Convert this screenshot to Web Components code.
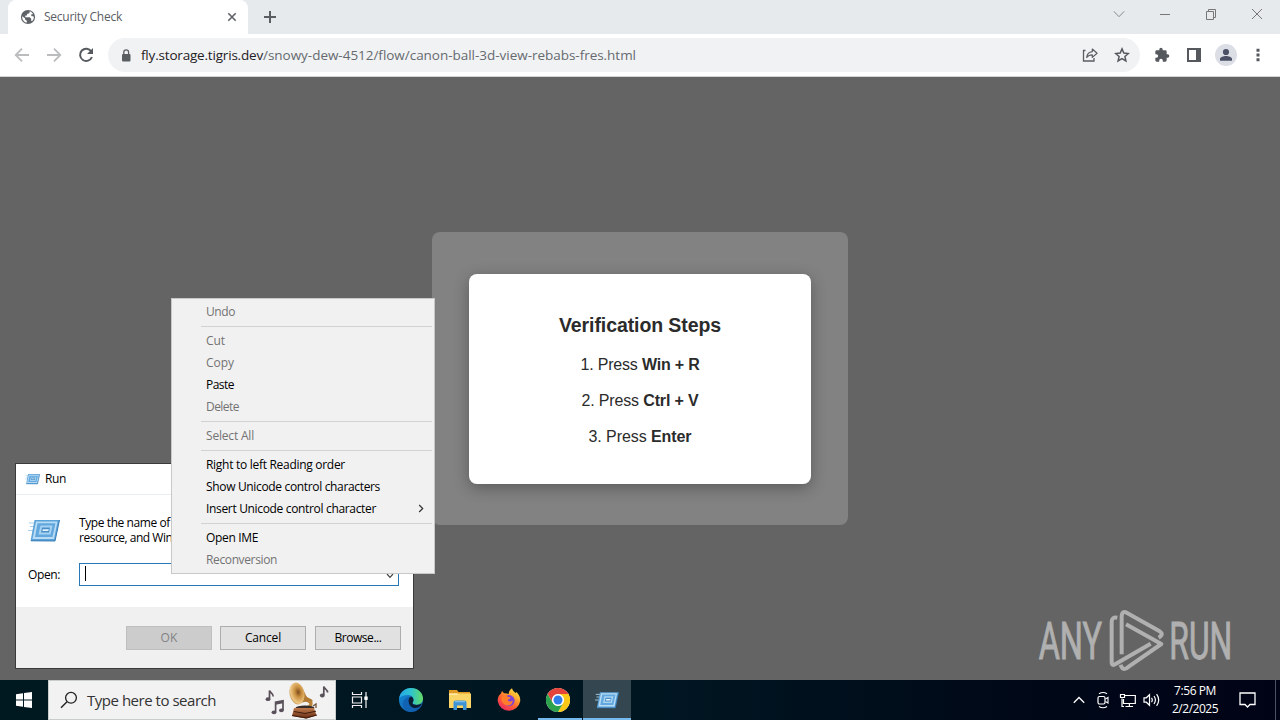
<!DOCTYPE html>
<html lang="en">
<head>
<meta charset="utf-8">
<title>Desktop</title>
<style>
  html, body { margin: 0; padding: 0; }
  body {
    width: 1280px;
    height: 720px;
    overflow: hidden;
    position: relative;
    background: #646464;
    font-family: "Open Sans", "Noto Sans", sans-serif;
    font-size: 12px;
  }
</style>
</head>
<body>
<desk-top>
  <browser-window slot="window" tab="Security Check" host="fly.storage.tigris.dev" path="/snowy-dew-4512/flow/canon-ball-3d-view-rebabs-fres.html">
    <verify-card heading="Verification Steps">
      <verify-step no="1" keys="Win + R" w="119"></verify-step>
      <verify-step no="2" keys="Ctrl + V" w="117"></verify-step>
      <verify-step no="3" keys="Enter" w="103"></verify-step>
    </verify-card>
  </browser-window>
  <task-bar slot="taskbar"></task-bar>
  <water-mark slot="float"></water-mark>
  <run-dialog slot="float"></run-dialog>
  <context-menu slot="float">
    <menu-item w="29" disabled>Undo</menu-item>
    <menu-line></menu-line>
    <menu-item w="19" disabled>Cut</menu-item>
    <menu-item w="28" disabled>Copy</menu-item>
    <menu-item w="28">Paste</menu-item>
    <menu-item w="33" disabled>Delete</menu-item>
    <menu-line></menu-line>
    <menu-item w="48" disabled>Select All</menu-item>
    <menu-line></menu-line>
    <menu-item w="139">Right to left Reading order</menu-item>
    <menu-item w="174">Show Unicode control characters</menu-item>
    <menu-item w="170" submenu>Insert Unicode control character</menu-item>
    <menu-line></menu-line>
    <menu-item w="52">Open IME</menu-item>
    <menu-item w="71" disabled>Reconversion</menu-item>
  </context-menu>
</desk-top>

<script>
(function() {
  const icons = {
    globe: `<svg width="16" height="16" viewBox="0 0 16 16"><circle cx="8" cy="8" r="7.1" fill="#5f6368"/><path d="M2.2 7.2 5 9.2v1.3l1.8 1.2v1.9C4 13.200 2 10.600 2.200 7.200zM9.800 2.300 9.300 4.200 7 4.900v1.700H5.300v1.600h4.400l1.500 1.500v2.400h1c1.300-1.200 1.700-2.900 1.600-4.600l-2.500-.6V5.200h1.800C12.300 3.800 11.200 2.700 9.800 2.300z" fill="#fff"/></svg>`,
    tabclose: `<svg width="10" height="10" viewBox="0 0 10 10"><path d="M1.300 1.300 8.700 8.700M8.700 1.300 1.300 8.700" stroke="#5f6368" stroke-width="1.600"/></svg>`,
    plus: `<svg width="12" height="12" viewBox="0 0 12 12"><path d="M6 0v12M0 6h12" stroke="#5a5e63" stroke-width="2"/></svg>`,
    down: `<svg width="12" height="12" viewBox="0 0 12 12"><path d="m.8 3.300 5.200 5.400 5.200-5.400" fill="none" stroke="#85888c" stroke-width="1"/></svg>`,
    min: `<svg width="12" height="12" viewBox="0 0 12 12"><path d="M1 6.500h10" stroke="#777" stroke-width="1"/></svg>`,
    restore: `<svg width="12" height="12" viewBox="0 0 12 12"><path d="M1.500 3.500h7v8h-7zM3.500 3.500v-2h7v8h-2" fill="none" stroke="#777" stroke-width="1"/></svg>`,
    winclose: `<svg width="12" height="12" viewBox="0 0 12 12"><path d="m1 1 10 10M11 1 1 11" stroke="#777" stroke-width="1"/></svg>`,
    back: `<svg width="16" height="16" viewBox="0 0 16 16"><path d="M15 8H2M8 1.700 1.700 8 8 14.300" fill="none" stroke="#babcbe" stroke-width="1.800"/></svg>`,
    forward: `<svg width="16" height="16" viewBox="0 0 16 16"><path d="M1 8h13M8 1.700 14.300 8 8 14.300" fill="none" stroke="#babcbe" stroke-width="1.800"/></svg>`,
    reload: `<svg width="16" height="16" viewBox="0 0 16 16"><path d="M13.300 4.500A6.100 6.100 0 1 0 13.900 10" fill="none" stroke="#55595e" stroke-width="2"/><path d="M15 1v6H9z" fill="#55595e"/></svg>`,
    lock: `<svg width="10" height="13" viewBox="0 0 10 13"><rect x="1" y="5" width="8.500" height="7.500" rx="1" fill="#5a5e63"/><path d="M2.800 5.500V3.300a2.400 2.400 0 0 1 4.800 0v2.200" fill="none" stroke="#5a5e63" stroke-width="1.300"/></svg>`,
    share: `<svg width="16" height="16" viewBox="0 0 16 16"><path d="M3.500 3.500h-2v10.500h10.500v-3" fill="none" stroke="#5a5e63" stroke-width="1.300"/><path d="M4.700 10.500c.3-3.600 2.300-5.500 5.600-5.900V2l4.800 4.200-4.800 4.200V7.800c-2.500 0-4.200.7-5.600 2.700z" fill="none" stroke="#5a5e63" stroke-width="1.200" stroke-linejoin="round"/></svg>`,
    star: `<svg width="16" height="16" viewBox="0 0 16 16"><path d="m8 1.900 1.800 4.200 4.500.4-3.400 3 1 4.400L8 11.600l-3.900 2.300 1-4.400-3.400-3 4.500-.4z" fill="none" stroke="#55595e" stroke-width="1.500"/></svg>`,
    puzzle: `<svg width="16" height="16" viewBox="0 0 24 24"><path d="M20.500 11H19V7a2 2 0 0 0-2-2h-4V3.500a2.500 2.500 0 0 0-5 0V5H4a2 2 0 0 0-2 2v3.800h1.500a2.700 2.700 0 0 1 0 5.400H2V20a2 2 0 0 0 2 2h3.800v-1.500a2.700 2.700 0 0 1 5.400 0V22H17a2 2 0 0 0 2-2v-4h1.500a2.500 2.500 0 0 0 0-5z" fill="#55595e"/></svg>`,
    side: `<svg width="14" height="14" viewBox="0 0 14 14"><path d="M0 0h14v14H0zM2 2v10h7V2z" fill="#55595e" fill-rule="evenodd"/></svg>`,
    avatar: `<svg width="22" height="22" viewBox="0 0 22 22"><circle cx="11" cy="11" r="11" fill="#dcdee6"/><circle cx="11" cy="8" r="3.100" fill="#4c5067"/><path d="M5 16.800V15c0-2 3.500-3 6-3s6 1 6 3v1.800z" fill="#4c5067"/></svg>`,
    dots: `<svg width="4" height="14" viewBox="0 0 4 14"><path d="M.5.700h3v3h-3zM.5 5.500h3v3h-3zM.5 10.300h3v3h-3z" fill="#55595e"/></svg>`,
    submenu: `<svg width="6" height="9" viewBox="0 0 6 9"><path d="M1.200 1 4.700 4.500 1.200 8" fill="none" stroke="#333" stroke-width="1.200"/></svg>`,
    combo: `<svg width="8" height="6" viewBox="0 0 8 6"><path d="m1 1 3 3.300L7 1" fill="none" stroke="#444" stroke-width="1.200"/></svg>`,
    run: `<svg width="100%" height="100%" viewBox="0 0 32 24">
      <path d="M1 4.500h8M2 8h6M0 12h6" stroke="#a9cfea" stroke-width="1.200"/>
      <path d="M6.500 1.500h25L27 22.500H2.500z" fill="#5ba3d9"/>
      <path d="M8 3h21.500L26 20.600H4.500z" fill="#b9dcf4"/>
      <path d="M9.500 4.800h18L24.500 18.500H7z" fill="#62a8de"/>
      <path d="M12.500 7h12l-2 9H10.500z" fill="#a6d3f2"/>
      <path d="M14 9h8l-1 5h-8z" fill="#4a8fc8"/>
      <path d="M14.800 10.800h6l-.5 1.800h-5.900z" fill="#e4f2fc"/>
      <path d="m3 22.300 24 .2 4.500-21" fill="none" stroke="#397eb8" stroke-width="1"/></svg>`,
    start: `<svg width="16" height="16" viewBox="0 0 16 16"><path d="M0 2.200 7 1.200v6.300H0zM8 1 16 0v7.500H8zM0 8.500h7v6.300l-7-1zM8 8.500h8V16l-8-1.100z" fill="#fff"/></svg>`,
    search: `<svg width="18" height="18" viewBox="0 0 18 18"><circle cx="11" cy="6.800" r="5.400" fill="none" stroke="#222" stroke-width="1.300"/><path d="m7 10.700-6 6" stroke="#222" stroke-width="1.400"/></svg>`,
    // notes left and right of the gramophone
    music: `<svg width="66" height="38" viewBox="0 0 66 38">
      <defs>
        <radialGradient id="horn" cx=".6" cy=".45" r=".65"><stop offset="0" stop-color="#7b4a1c"/><stop offset=".35" stop-color="#c98f40"/><stop offset=".8" stop-color="#eec987"/><stop offset="1" stop-color="#a9702e"/></radialGradient>
        <linearGradient id="wood" x2="0" y2="1"><stop stop-color="#c17a4c"/><stop offset="1" stop-color="#63290f"/></linearGradient>
      </defs>
      <g fill="none" stroke="#59505a" stroke-width="1.700">
        <path d="M4.500 18V9.500c.5 2.500 4 2.500 3.700 6M10.600 31V21.300l7.400-1.600V29M58.800 14V5.500c.6 2.700 4 2.800 3.700 6"/>
      </g>
      <g fill="#59505a"><ellipse cx="3" cy="18.200" rx="2.400" ry="1.900"/><ellipse cx="9" cy="31.300" rx="2.400" ry="1.900"/><ellipse cx="16.400" cy="29.300" rx="2.400" ry="1.900"/><ellipse cx="57.300" cy="14.500" rx="2.400" ry="1.900"/><path d="M10.600 21.300 18 19.700v2.500l-7.400 1.600z"/></g>
      <path d="M34 15c8 3 10 1 13 5 2 4-1 7-5 8v-3c3-1 3-3 0-4-4-1-9 0-12-2z" fill="#b88339"/>
      <path d="M30 2.500c7 0 9 8 11 12 2 4 6 2 7 6-2-1-4 0-6 0-4 0-5 2-9 2z" fill="#b07a35"/>
      <ellipse cx="32" cy="12.500" rx="7.400" ry="11" transform="rotate(-12 32 12.500)" fill="url(#horn)"/>
      <ellipse cx="40" cy="27" rx="9.500" ry="2.500" fill="#352b28"/>
      <path d="m29 27 20 0 2.500 7.500-10 3L27 35z" fill="url(#wood)"/><path d="m29 30.500 11 2 11-2.300M27 34.500l14 2.500 11-3" fill="none" stroke="#3f1d10" stroke-width="1"/>
      <path d="m48 25 3-2v4" fill="none" stroke="#6f5238" stroke-width="1.300"/></svg>`,
    taskview: `<svg width="18" height="16" viewBox="0 0 18 16"><path d="M1.500 0v2.500h9V0M1.500 16v-2.500h9V16M1.500 5h9v6h-9zM15 0v16" fill="none" stroke="#f0f0f0" stroke-width="1.200"/><path d="M13.300 4.500h3.400v3.400h-3.400z" fill="#fff"/></svg>`,
    edge: `<svg width="24" height="24" viewBox="0 0 24 24">
      <defs><linearGradient id="ea" x1="0" x2="1"><stop stop-color="#26a8e8"/><stop offset=".5" stop-color="#2fc3cf"/><stop offset="1" stop-color="#65dc62"/></linearGradient>
      <linearGradient id="eb" x1="0" y1="0" x2=".7" y2="1"><stop stop-color="#1593dc"/><stop offset="1" stop-color="#1259a8"/></linearGradient></defs>
      <circle cx="12" cy="12" r="12" fill="url(#eb)"/>
      <path d="M.2 10.500C1 4.500 6 0 12 0c7 0 12 5 12 10.500 0 4-3 6.300-6.500 6.300-2.500 0-4.200-1-4-2 .2-.6 1-1.200 1-3C14.500 8.500 11.500 7 9 7 4.500 7 1.300 8.500.2 10.500z" fill="url(#ea)"/>
      <path d="M9.300 12.500c0-1.800 1-3.500 3-4 1.400.8 2.200 2 2.200 3.400 0 1.700-1 2.200-1 3 0 1.100 2 2 4.200 2 1.800 0 3.200-.5 4.300-1.200.5.1.6.500.3 1C20.600 19 18 20.300 15.300 20c-4-.5-6-4-6-7.500z" fill="#0a1d33"/>
      <path d="M9.300 12.500c-.1 5 4 8.800 9 8.600A12 12 0 0 1 12 24C7 23.500 3.500 20 4 15.500 4.400 11.500 8 8.500 12.300 8.500c-2 .5-3 2.200-3 4z" fill="#1262b4"/></svg>`,
    folder: `<svg width="22" height="20" viewBox="0 0 22 20"><path d="M0 2.500V0h8l1.500 2H21v3H0z" fill="#e09c26"/><path d="M0 3.500h22V18H0z" fill="#fbd667"/><path d="M0 3.500 8 3.300 9.500 5H0z" fill="#ffe9a3"/><path d="M4.500 20V12.500q0-2 2-2h9q2 0 2 2V20h-3.500v-4.500h-6V20z" fill="#3e93d5"/><path d="M6 11h10v1.300H6z" fill="#7dbdea"/></svg>`,
    firefox: `<svg width="24" height="24" viewBox="0 0 24 24">
      <defs><linearGradient id="ff" x1=".9" y1="0" x2=".2" y2="1"><stop stop-color="#fff04a"/><stop offset=".35" stop-color="#ffa72f"/><stop offset=".65" stop-color="#ff5a35"/><stop offset="1" stop-color="#e82667"/></linearGradient></defs>
      <path d="M4 5.500 5 3l2 2.200c2 0 3.500.3 4.500 1C12 3 13.200 1.300 15 .2c.5 2.500 2 3.300 3.700 4.800L19.500 4c3 2.800 4 6 3.700 9.300A11.400 11.400 0 0 1 .7 13C.5 9.500 2 7 4 5.500z" fill="url(#ff)"/>
      <circle cx="12" cy="12.600" r="5.600" fill="#7d43d8"/>
      <path d="M4.300 9.500C7 6.500 10 7 11 9c1 0 2.200.1 2.500.7-.5 1.400-2.500 1.500-2.700 2.500 1 2.300 3.700 1.200 4.800.4.200 3-2.200 5-5 4.800C6.500 17 4 13.500 4.300 9.500z" fill="#ff7e2b"/></svg>`,
    chrome: `<svg width="24" height="24" viewBox="0 0 24 24"><circle cx="12" cy="12" r="12" fill="#fff"/><path d="M1.600 6A12 12 0 0 1 22.400 6H12a6 6 0 0 0-5.200 9z" fill="#e5443a"/><path d="M22.400 6A12 12 0 0 1 12 24l5.200-9A6 6 0 0 0 12 6z" fill="#fbc817"/><path d="M12 24A12 12 0 0 1 1.600 6l5.200 9a6 6 0 0 0 10.400 0z" fill="#2ca24c"/><circle cx="12" cy="12" r="5.600" fill="#fff"/><circle cx="12" cy="12" r="4.500" fill="#2f7de9"/></svg>`,
    caret: `<svg width="12" height="8" viewBox="0 0 12 8"><path d="m.8 6.800 5.200-5.300 5.200 5.300" fill="none" stroke="#fff" stroke-width="1.300"/></svg>`,
    camera: `<svg width="14" height="18" viewBox="0 0 14 18"><rect x="2" y="5.500" width="7" height="7.500" rx="1.500" fill="none" stroke="#fff" stroke-width="1.200"/><path d="m9.500 8 2.500-1.600v5.700L9.500 10.500M3 2.800Q7 .2 11 2.800M3 15.500q4 2.600 8 0" fill="none" stroke="#fff" stroke-width="1.100"/></svg>`,
    network: `<svg width="17" height="15" viewBox="0 0 17 15"><path d="M6 2.500h10.300v8H4.500V6M10.400 10.500v3M6.500 13.500h7.500M3 5.500v8h2" fill="none" stroke="#fff" stroke-width="1.200"/><path d="M1.500 1.500h4v3h-4z" fill="none" stroke="#fff" stroke-width="1.200"/></svg>`,
    sound: `<svg width="17" height="14" viewBox="0 0 17 14"><path d="M1 4.800h2.300L6.500 1.700v10.600L3.300 9.200H1zM8.500 4.800q1.600 2.200 0 4.400M11 3q2.800 4 0 8M13.600 1.200q4.200 5.800 0 11.600" fill="none" stroke="#fff" stroke-width="1.200"/></svg>`,
    notice: `<svg width="17" height="16" viewBox="0 0 17 16"><path d="M1 1h15v11.500h-5l-2.500 2.500L6 12.500H1z" fill="none" stroke="#fff" stroke-width="1.300"/></svg>`
  };

  function define(name, html, setup) {
    const template = document.createElement('template');
    template.innerHTML = html;
    customElements.define(name, class extends HTMLElement {
      constructor() {
        super();
        this.attachShadow({ mode: 'open' });
        this.shadowRoot.appendChild(template.content.cloneNode(true));
      }

      connectedCallback() {
        if (setup) setup(this, this.shadowRoot);
      }
    });
  }

  define('ui-icon', `
    <style>:host { display: block; flex: none; line-height: 0; } svg { display: block; } span { display: block; height: 100%; }</style>
    <span></span>
  `, (el, root) => {
    root.querySelector('span').innerHTML = icons[el.getAttribute('name')];
  });

  // Text with a fixed advance width: the difference is spread over the letters
  define('ui-text', `
    <style>
      :host { display: inline-block; flex: none; white-space: nowrap; }
      span { display: inline-block; }
    </style>
    <span><slot></slot></span>
  `, (el, root) => {
    const span = root.querySelector('span');
    const width = Number(el.getAttribute('w'));
    const natural = span.getBoundingClientRect().width;
    span.style.letterSpacing = (width - natural) / el.textContent.length + 'px';
    el.style.width = width + 'px';
  });

  define('desk-top', `
    <style>
      :host { display: grid; grid-template-rows: 680px 40px; width: 1280px; height: 720px; }
    </style>
    <slot name="window"></slot>
    <slot name="taskbar"></slot>
    <slot name="float"></slot>
  `);

  define('browser-window', `
    <style>
      :host { display: grid; grid-template-rows: 34px 43px 603px; }
      .tabs { display: flex; background: #e7eaed; }
      .tab {
        display: flex; align-items: center; box-sizing: border-box;
        width: 240px; margin-left: 8px; padding: 0 11px 0 12px;
        background: #fff; border-radius: 8px 8px 0 0; color: #5a5e63;
      }
      .tab ui-text { margin-left: 8px; padding-bottom: 1px; }
      .tab ui-icon:last-child { margin-left: auto; }
      .new { width: 44px; display: grid; place-items: center; }
      .controls { display: grid; grid-template-columns: repeat(4, 46px); margin-left: auto; height: 28px; place-items: center; }
      .bar {
        display: flex; align-items: center; box-sizing: border-box;
        background: #fff; border-bottom: 1px solid #d4d5d6; padding: 0 6px;
      }
      .btn { width: 32px; height: 32px; display: grid; place-items: center; }
      .pill {
        display: flex; align-items: center; box-sizing: border-box;
        width: 1032px; height: 34px; margin-left: 6px; margin-right: 6px; padding: 0 2px 0 13px;
        border-radius: 17px; background: #f1f2f4; font-size: 13.5px; color: #666a6f;
      }
      .host { margin-left: 10px; color: #1f2124; }
      .share { margin-left: auto; }
      .page { display: grid; place-items: center; background: #646464; }
    </style>
    <div class="tabs">
      <div class="tab">
        <ui-icon name="globe"></ui-icon>
        <ui-text class="title" w="78"></ui-text>
        <ui-icon name="tabclose"></ui-icon>
      </div>
      <div class="new"><ui-icon name="plus"></ui-icon></div>
      <div class="controls">
        <ui-icon name="down"></ui-icon>
        <ui-icon name="min"></ui-icon>
        <ui-icon name="restore"></ui-icon>
        <ui-icon name="winclose"></ui-icon>
      </div>
    </div>
    <div class="bar">
      <div class="btn"><ui-icon name="back"></ui-icon></div>
      <div class="btn"><ui-icon name="forward"></ui-icon></div>
      <div class="btn"><ui-icon name="reload"></ui-icon></div>
      <div class="pill">
        <ui-icon name="lock"></ui-icon>
        <ui-text class="host" w="122"></ui-text><ui-text class="path" w="373"></ui-text>
        <div class="btn share"><ui-icon name="share"></ui-icon></div>
        <div class="btn"><ui-icon name="star"></ui-icon></div>
      </div>
      <div class="btn"><ui-icon name="puzzle"></ui-icon></div>
      <div class="btn"><ui-icon name="side"></ui-icon></div>
      <div class="btn"><ui-icon name="avatar"></ui-icon></div>
      <div class="btn"><ui-icon name="dots"></ui-icon></div>
    </div>
    <div class="page"><slot></slot></div>
  `, (el, root) => {
    const set = (sel, text) => {
      const old = root.querySelector(sel);
      const node = old.cloneNode();
      node.textContent = text;
      old.replaceWith(node);
    };
    set('.title', el.getAttribute('tab'));
    set('.host', el.getAttribute('host'));
    set('.path', el.getAttribute('path'));
  });

  define('verify-card', `
    <style>
      :host {
        display: block; box-sizing: border-box; width: 416px; height: 293px;
        padding: 42px 37px; border-radius: 8px; background: #828282;
        font-family: "Liberation Sans", Arial, sans-serif; color: #2b2b2b;
      }
      .card {
        box-sizing: border-box; height: 210px; padding-top: 39px; text-align: center;
        background: #fff; border-radius: 8px; box-shadow: 0 4px 15px rgba(0, 0, 0, .3);
      }
      h2 { margin: 0 0 10px; font-size: 19.5px; line-height: 24px; height: 24px; }
    </style>
    <div class="card">
      <h2></h2>
      <slot></slot>
    </div>
  `, (el, root) => {
    root.querySelector('h2').innerHTML = `<ui-text w="162">${el.getAttribute('heading')}</ui-text>`;
  });

  define('verify-step', `
    <style>:host { display: block; height: 36px; line-height: 36px; font-size: 16px; }</style>
    <div></div>
  `, (el, root) => {
    root.querySelector('div').innerHTML =
      `<ui-text w="${el.getAttribute('w')}">${el.getAttribute('no')}. Press <b>${el.getAttribute('keys')}</b></ui-text>`;
  });

  define('water-mark', `
    <style>
      :host { position: absolute; left: 1030px; top: 600px; width: 250px; height: 80px; }
      text { font-family: Roboto, sans-serif; font-size: 156px; stroke: #b0b0b0; stroke-width: 3px; }
    </style>
    <svg width="250" height="80" viewBox="0 0 750 240" fill="#b0b0b0">
      <text x="26" y="178" textLength="190" lengthAdjust="spacingAndGlyphs">ANY</text>
      <text x="418" y="178" textLength="189" lengthAdjust="spacingAndGlyphs">RUN</text>
      <g fill="none" stroke="#b0b0b0" stroke-width="12" stroke-linejoin="round">
        <path d="M262 53Q245 50 245 66V188Q246 200 258 191L362 131"/>
        <path d="M275 163V48Q276 32 290 38L389 94Q403 103 386 113"/>
        <path d="M288 73 394 132 296 200Q278 216 272 194"/>
      </g>
    </svg>
  `);

  define('dialog-button', `
    <style>
      :host {
        display: grid; place-items: center; box-sizing: border-box; width: 86px; height: 24px; padding-bottom: 1px;
        border: 1px solid #adadad; background: #e1e1e1; color: #000;
      }
      :host([disabled]) { background: #ccc; border-color: #bfbfbf; color: #838383; }
    </style>
    <slot></slot>
  `);

  define('run-dialog', `
    <style>
      :host {
        position: absolute; left: 15px; top: 463px; box-sizing: border-box; width: 399px; height: 206px;
        display: grid; grid-template-rows: 31px 112px 1fr;
        border: 1px solid #3a3a3a; background: #fff; color: #000;
      }
      .title { display: flex; align-items: center; padding: 0 0 1px 9px; gap: 5px; border-bottom: 1px solid #e9eef2; }
      .title ui-icon { width: 15px; height: 12px; }
      .body { display: grid; grid-template-columns: 51px 320px; grid-template-rows: 30px 24px; row-gap: 17px; padding: 21px 0 0 12px; }
      .body > ui-icon { width: 32px; height: 25px; margin-top: 2px; }
      .hint { line-height: 15px; margin-top: -1px; }
      .hint div { height: 15px; }
      .open { line-height: 24px; }
      .field {
        display: flex; align-items: center; justify-content: space-between; box-sizing: border-box;
        height: 23px; border: 1px solid #2878b8; padding: 0 4px 0 5px;
      }
      .field ui-icon { margin-top: 2px; }
      .caret { width: 1px; height: 15px; background: #000; margin-bottom: 2px; }
      .foot { display: flex; justify-content: flex-end; background: #f0f0f0; padding: 19px 12px 0 0; }
      .foot dialog-button + dialog-button { margin-left: 8px; }
      .foot dialog-button:last-child { margin-left: 9px; }
    </style>
    <div class="title"><ui-icon name="run"></ui-icon><ui-text w="21">Run</ui-text></div>
    <div class="body">
      <ui-icon name="run"></ui-icon>
      <div class="hint">
        <div><ui-text w="91">Type the name of</ui-text></div>
        <div><ui-text w="121">resource, and Windows</ui-text></div>
      </div>
      <div class="open"><ui-text w="32">Open:</ui-text></div>
      <div class="field"><div class="caret"></div><ui-icon name="combo"></ui-icon></div>
    </div>
    <div class="foot">
      <dialog-button disabled><ui-text w="17">OK</ui-text></dialog-button>
      <dialog-button><ui-text w="36">Cancel</ui-text></dialog-button>
      <dialog-button><ui-text w="47">Browse...</ui-text></dialog-button>
    </div>
  `);

  define('context-menu', `
    <style>
      :host {
        position: absolute; left: 171px; top: 298px; box-sizing: border-box; width: 264px; height: 276px;
        padding: 2px; border: 1px solid #c8c8c8; background: #f1f1f1;
      }
    </style>
    <slot></slot>
  `);

  define('menu-line', `
    <style>
      :host { display: block; height: 7px; padding: 3px 0 0 27px; box-sizing: border-box; }
      div { height: 1px; background: #d2d2d2; }
    </style>
    <div></div>
  `);

  define('menu-item', `
    <style>
      :host { display: flex; align-items: center; justify-content: space-between; box-sizing: border-box; height: 22px; padding: 0 8px 2px 32px; color: #000; }
      :host([disabled]) { color: #737373; }
    </style>
  `, (el, root) => {
    const text = document.createElement('ui-text');
    text.setAttribute('w', el.getAttribute('w'));
    text.textContent = el.textContent;
    root.appendChild(text);
    if (el.hasAttribute('submenu')) {
      const arrow = document.createElement('ui-icon');
      arrow.setAttribute('name', 'submenu');
      root.appendChild(arrow);
    }
  });

  define('task-bar', `
    <style>
      :host { display: flex; height: 40px; background: linear-gradient(90deg, #001820 0, #001722 50%, #000918 78%, #000316 100%); color: #fff; }
      .cell { width: 48px; display: grid; place-items: center; }
      .search {
        display: flex; align-items: center; box-sizing: border-box; width: 288px; padding: 0 4px 0 11px;
        background: #f2f2f2; border: 1px solid #c9cccd; color: #333; font-size: 15px;
      }
      .search ui-text { margin-left: 9px; }
      .search ui-icon:last-child { margin-left: auto; }
      .apps { display: flex; width: 295px; box-sizing: border-box; }
      .apps .cell { width: 48.75px; box-sizing: border-box; }
      .apps .cell:first-child { width: 48px; margin-right: 3px; }
      .chrome { background: linear-gradient(#76b9ed, #76b9ed) 5px 38px / 44px 2px no-repeat; }
      .apps .active { width: 48px; margin-left: 1px; background: #34464f; border-bottom: 2px solid #76b9ed; padding-top: 2px; }
      .active ui-icon { width: 24px; height: 18px; }
      .tray { display: flex; margin-left: auto; margin-right: 4px; }
      .tray .small { width: 24px; }
      .clock { width: 64px; text-align: center; line-height: 18px; padding-top: 2px; box-sizing: border-box; }
      .clock div { height: 18px; }
      .notice { width: 40px; display: grid; place-items: center; }
      .edge { width: 1px; margin-left: 8px; background: #4a5364; }
    </style>
    <div class="cell"><ui-icon name="start"></ui-icon></div>
    <div class="search">
      <ui-icon name="search"></ui-icon>
      <ui-text w="129">Type here to search</ui-text>
      <ui-icon name="music"></ui-icon>
    </div>
    <div class="apps">
      <div class="cell"><ui-icon name="taskview"></ui-icon></div>
      <div class="cell"><ui-icon name="edge"></ui-icon></div>
      <div class="cell"><ui-icon name="folder"></ui-icon></div>
      <div class="cell"><ui-icon name="firefox"></ui-icon></div>
      <div class="cell chrome"><ui-icon name="chrome"></ui-icon></div>
      <div class="cell active"><ui-icon name="run"></ui-icon></div>
    </div>
    <div class="tray">
      <div class="cell small"><ui-icon name="caret"></ui-icon></div>
      <div class="cell small"><ui-icon name="camera"></ui-icon></div>
      <div class="cell small"><ui-icon name="network"></ui-icon></div>
      <div class="cell small"><ui-icon name="sound"></ui-icon></div>
      <div class="clock">
        <div><ui-text w="42">7:56 PM</ui-text></div>
        <div><ui-text w="46">2/2/2025</ui-text></div>
      </div>
      <div class="notice"><ui-icon name="notice"></ui-icon></div>
      <div class="edge"></div>
    </div>
  `);
})();
</script>
</body>
</html>
